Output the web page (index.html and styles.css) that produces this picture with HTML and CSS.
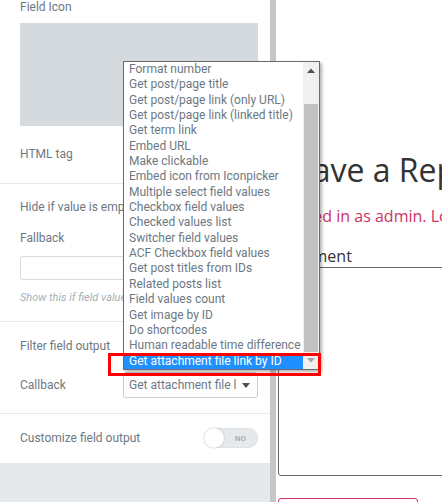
FILE: index.html
```html
<!DOCTYPE html>
<html lang="en">
<head>
<meta charset="utf-8">
<title>Dynamic Field</title>
<link rel="stylesheet" href="styles.css">
</head>
<body>
<div class="page">
  <aside class="panel">
    <section class="sec sec-first">
      <div class="label">Field Icon</div>
      <div class="icon-box"></div>
      <div class="row row-select">
        <span class="label">HTML tag</span>
        <div class="select"><span class="select-text">Default</span><span class="caret"></span></div>
      </div>
    </section>
    <section class="sec sec-second">
      <div class="row row-switch">
        <span class="label">Hide if value is empty</span>
        <span class="toggle"><span class="knob"></span><span class="toggle-text">NO</span></span>
      </div>
      <div class="label label-fallback">Fallback</div>
      <div class="input"></div>
      <div class="desc">Show this if field value is empty</div>
    </section>
    <section class="sec sec-third">
      <div class="row row-switch">
        <span class="label">Filter field output</span>
        <span class="toggle on"><span class="toggle-text">YES</span><span class="knob"></span></span>
      </div>
      <div class="row row-select row-callback">
        <span class="label">Callback</span>
        <div class="select"><span class="select-text">Get attachment file link by ID</span><span class="caret"></span></div>
      </div>
    </section>
    <section class="sec sec-fourth">
      <div class="row row-switch">
        <span class="label">Customize field output</span>
        <span class="toggle"><span class="knob"></span><span class="toggle-text">NO</span></span>
      </div>
    </section>
    <div class="panel-foot"></div>
  </aside>
  <div class="strip"></div>
  <main class="content">
    <h2 class="reply-title">Leave a Reply</h2>
    <p class="logged">Logged in as admin. Log out?</p>
    <label class="comment-label">Comment</label>
    <div class="textarea"></div>
    <div class="submit">Post Comment</div>
  </main>

  <div class="dropdown">
    <ul class="options">
      <li>Format number</li>
      <li>Get post/page title</li>
      <li>Get post/page link (only URL)</li>
      <li>Get post/page link (linked title)</li>
      <li>Get term link</li>
      <li>Embed URL</li>
      <li>Make clickable</li>
      <li>Embed icon from Iconpicker</li>
      <li>Multiple select field values</li>
      <li>Checkbox field values</li>
      <li>Checked values list</li>
      <li>Switcher field values</li>
      <li>ACF Checkbox field values</li>
      <li>Get post titles from IDs</li>
      <li>Related posts list</li>
      <li>Field values count</li>
      <li>Get image by ID</li>
      <li>Do shortcodes</li>
      <li>Human readable time difference</li>
      <li class="selected">Get attachment file link by ID</li>
    </ul>
    <div class="sb">
      <div class="sb-btn"><svg width="8" height="5" viewBox="0 0 8 5"><polygon points="0,5 4,0.5 8,5" fill="#505050"/></svg></div>
      <div class="sb-track"><div class="sb-thumb"></div></div>
      <div class="sb-btn"><svg width="8" height="5" viewBox="0 0 8 5"><polygon points="0,0 8,0 4,4.5" fill="#a3a3a3"/></svg></div>
    </div>
  </div>
  <div class="highlight"></div>
</div>
</body>
</html>
```

FILE: styles.css
```css
* { box-sizing: border-box; }
html, body { margin: 0; padding: 0; height: 100%; overflow: hidden; background: #fff; }

.page {
  position: relative;
  display: flex;
  height: 502px;
  width: 442px;
  overflow: hidden;
}

/* ---------- left panel ---------- */
.panel {
  width: 270px;
  flex: 0 0 270px;
  display: flex;
  flex-direction: column;
  background: #fff;
  font-family: Roboto, "Liberation Sans", sans-serif;
  font-size: 12px;
  color: #6d7882;
}
.sec {
  padding: 0 12px 0 20px;
  border-top: 1px solid #e6e9ec;
}
.sec-first { border-top: 0; padding-bottom: 15px; }
.sec-second { padding-top: 13px; padding-bottom: 17px; }
.sec-third { padding-top: 14px; padding-bottom: 15px; }
.sec-fourth { padding-top: 14px; padding-bottom: 15px; }

.label { line-height: 15px; white-space: nowrap; }
.icon-box {
  margin-top: 8px;
  height: 103px;
  background: #d5dadf;
}
.row {
  display: flex;
  align-items: center;
  justify-content: space-between;
}
.row-select { height: 27px; margin-top: 15px; }
.row-callback { height: 26px; margin-top: 16px; }
.row-switch { height: 20px; }

.select {
  width: 135px;
  height: 100%;
  border: 1px solid #c9ced3;
  border-radius: 3px;
  display: flex;
  align-items: center;
  padding: 0 7px 0 5px;
  gap: 6px;
}
.select-text {
  flex: 1;
  overflow: hidden;
  white-space: nowrap;
  line-height: 15px;
}
.caret {
  width: 0; height: 0;
  border-left: 4px solid transparent;
  border-right: 4px solid transparent;
  border-top: 5px solid #495157;
}

.label-fallback { margin-top: 14px; }
.input {
  margin-top: 10px;
  height: 24px;
  border: 1px solid #d5dadf;
  border-radius: 3px;
}
.desc {
  margin-top: 11px;
  font-size: 11px;
  line-height: 13px;
  font-style: italic;
  color: #a4afb7;
  white-space: nowrap;
}

.toggle {
  position: relative;
  width: 54px;
  height: 20px;
  border-radius: 10px;
  background: #e6e9ec;
  box-shadow: inset 0 0 0 1px #dfe2e6;
  display: flex;
  align-items: center;
  justify-content: space-between;
}
.knob {
  width: 20px; height: 20px;
  border-radius: 50%;
  background: #fff;
  box-shadow: 0 0 2px rgba(0,0,0,.25);
}
.toggle-text {
  font-size: 8px;
  font-weight: 700;
  color: #a4afb7;
  padding: 0 12px 0 0;
}
.toggle.on { background: #39b54a; }
.toggle.on .toggle-text { color: #fff; padding: 0 0 0 10px; }

.panel-foot { flex: 1; background: #e6e9ec; }

.strip { flex: 0 0 6px; background: #c6c6c6; }

/* ---------- front-end content ---------- */
.content {
  flex: 1;
  min-width: 0;
  padding: 151px 0 0 2px;
  font-family: "Open Sans", "Noto Sans", sans-serif;
  color: #333;
  white-space: nowrap;
  overflow: hidden;
}
.reply-title {
  margin: 0;
  font-size: 32px;
  font-weight: 400;
  line-height: 38px;
}
.logged {
  margin: 15px 0 0;
  font-size: 16px;
  line-height: 24px;
  color: #cc3366;
}
.comment-label {
  display: block;
  margin-top: 17px;
  font-size: 16px;
  line-height: 22px;
}
.textarea {
  width: 300px;
  height: 209px;
  border: 1px solid #666;
  border-radius: 3px;
}
.submit {
  margin-top: 22px;
  width: 140px;
  height: 40px;
  border: 1px solid #cc3366;
  border-radius: 3px;
}

/* ---------- open select list (overlay) ---------- */
.dropdown {
  position: absolute;
  left: 123px;
  top: 61px;
  width: 197px;
  height: 309px;
  border: 1px solid #6b6b6b;
  background: #fff;
  display: flex;
  box-shadow: 2px 2px 3px rgba(0,0,0,.3);
}
.options {
  list-style: none;
  margin: 0;
  padding: 0;
  flex: 1;
  font-family: Roboto, "Liberation Sans", sans-serif;
  font-size: 12px;
  color: #6d7882;
}
.options li {
  height: 15.35px;
  line-height: 15.35px;
  padding-left: 5px;
  white-space: nowrap;
  overflow: hidden;
}
.options li.selected { background: #1e90ff; color: #fff; }

.sb {
  width: 16px;
  display: flex;
  flex-direction: column;
  background: #f0f0f0;
}
.sb-btn {
  height: 17px;
  display: flex;
  align-items: center;
  justify-content: center;
}
.sb-track { flex: 1; display: flex; flex-direction: column; justify-content: flex-end; }
.sb-thumb { height: 248px; margin: 0 1px; background: #c1c1c1; }

.highlight {
  position: absolute;
  left: 108px;
  top: 353px;
  width: 213px;
  height: 23px;
  border: 3px solid #ff0000;
}
```
